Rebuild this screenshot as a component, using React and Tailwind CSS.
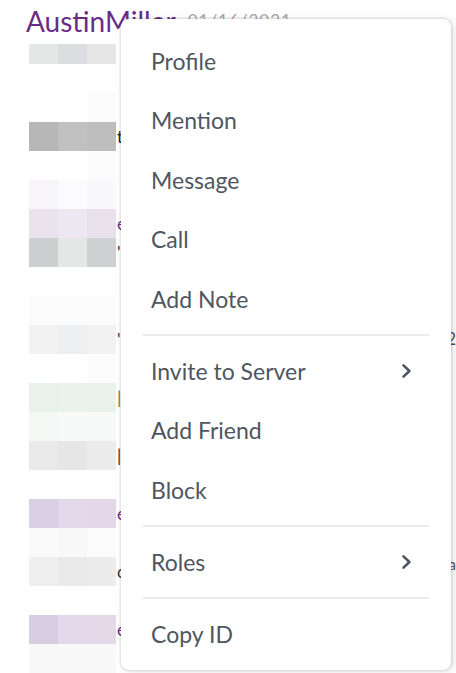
import { Fragment } from 'react';

const rows = [
  { h: 'h-[20px]', c: ['bg-[#e6e7e7]', 'bg-[#dcdde0]', 'bg-[#e6e6e6]'], t: '', tc: '' },
  { h: 'h-[29px]', c: ['bg-white', 'bg-white', 'bg-white'], t: '', tc: '' },
  { h: 'h-[29px]', c: ['bg-white', 'bg-white', 'bg-[#fbfbfb]'], t: '', tc: '' },
  { h: 'h-[29px]', c: ['bg-[#b7b7b7]', 'bg-[#c1c1c1]', 'bg-[#bdbdbd]'], t: 't', tc: 'text-[#222]' },
  { h: 'h-[29px]', c: ['bg-white', 'bg-white', 'bg-[#fcfcfc]'], t: '', tc: '' },
  { h: 'h-[29px]', c: ['bg-[#f7f5f8]', 'bg-[#fbfbfd]', 'bg-[#f9f8fa]'], t: '', tc: '' },
  { h: 'h-[29px]', c: ['bg-[#eae3ee]', 'bg-[#ede7f1]', 'bg-[#e8e1ec]'], t: 'e', tc: 'text-[#6a2c8a]' },
  { h: 'h-[29px]', c: ['bg-[#cdced0]', 'bg-[#e5e7e6]', 'bg-[#cfd0d2]'], t: "'", tc: 'text-[#333]' },
  { h: 'h-[29px]', c: ['bg-white', 'bg-white', 'bg-white'], t: '', tc: '' },
  { h: 'h-[29px]', c: ['bg-[#fcfcfc]', 'bg-[#fcfcfc]', 'bg-[#fbfbfb]'], t: '', tc: '' },
  { h: 'h-[29px]', c: ['bg-[#f2f2f2]', 'bg-[#eeeff1]', 'bg-[#f2f2f2]'], t: "'", tc: 'text-[#333]' },
  { h: 'h-[29px]', c: ['bg-white', 'bg-white', 'bg-[#fcfcfc]'], t: '', tc: '' },
  { h: 'h-[29px]', c: ['bg-[#e9f1ec]', 'bg-[#e9f2ec]', 'bg-[#e9f1eb]'], t: '|', tc: 'text-[#3c8a5a]' },
  { h: 'h-[29px]', c: ['bg-[#f4f8f5]', 'bg-[#f8faf9]', 'bg-[#f7f9f8]'], t: '', tc: '' },
  { h: 'h-[29px]', c: ['bg-[#e9e9e9]', 'bg-[#e5e6e5]', 'bg-[#ececec]'], t: '|', tc: 'text-[#333]' },
  { h: 'h-[29px]', c: ['bg-white', 'bg-white', 'bg-white'], t: '', tc: '' },
  { h: 'h-[29px]', c: ['bg-[#dbcfe3]', 'bg-[#e4d9ea]', 'bg-[#e4d7e9]'], t: 'e', tc: 'text-[#6a2c8a]' },
  { h: 'h-[29px]', c: ['bg-[#fafafa]', 'bg-[#f8f8f8]', 'bg-[#fbfbfb]'], t: '', tc: '' },
  { h: 'h-[29px]', c: ['bg-[#efefef]', 'bg-[#e8e9e8]', 'bg-[#ececec]'], t: 'c', tc: 'text-[#333]' },
  { h: 'h-[29px]', c: ['bg-white', 'bg-white', 'bg-white'], t: '', tc: '' },
  { h: 'h-[29px]', c: ['bg-[#d9cde2]', 'bg-[#e4d9ea]', 'bg-[#e4d8e9]'], t: 'e', tc: 'text-[#6a2c8a]' },
  { h: 'h-[29px]', c: ['bg-[#f8f8f8]', 'bg-[#f9f9f9]', 'bg-[#f9f9f9]'], t: '', tc: '' },
];

const menu = [
  ['Profile'],
  ['Mention'],
  ['Message'],
  ['Call'],
  ['Add Note'],
  'divider',
  ['Invite to Server', true],
  ['Add Friend'],
  ['Block'],
  'divider',
  ['Roles', true],
  'divider',
  ['Copy ID'],
];

function Chevron() {
  return (
    <svg width="11" height="16" viewBox="0 0 11 16" fill="none">
      <path d="M2.5 2.4 L8.4 8 L2.5 13.6" stroke="#4f5660" strokeWidth="2.6" strokeLinecap="round" strokeLinejoin="round" />
    </svg>
  );
}

export default function App() {
  return (
    <div className="relative w-[456px] h-[673px] overflow-hidden bg-white font-['Lato','Noto_Sans',sans-serif]">
      {/* chat behind the menu */}
      <div className="flex flex-col">
        <div className="flex items-baseline h-[44px] pl-[26px] pt-[2px] gap-[12px]">
          <span className="text-[28px] text-[#6a2c8a] leading-[38px]">AustinMiller</span>
          <span className="text-[17px] text-[#a8a8a8] tracking-[1px] -translate-y-[5px]">01/16/2021</span>
        </div>
        {rows.map((r, i) => (
          <div key={i} className={`flex pl-[29px] ${r.h}`}>
            {r.c.map((c, j) => (
              <div key={j} className={`w-[29px] h-full ${c}`} />
            ))}
            <span className={`pl-[1px] text-[17px] leading-[29px] ${r.tc}`}>{r.t}</span>
          </div>
        ))}
      </div>
      <div className="absolute right-0 top-[326px] text-[17px] text-[#555]">2</div>
      <div className="absolute right-0 top-[553px] text-[15px] text-[#555]">a</div>

      {/* context menu */}
      <div className="absolute left-[121px] top-[19px] w-[330px] h-[651px] rounded-lg bg-white px-[22px] pt-[12px] shadow-[0_0_0_1.5px_rgba(0,0,0,0.07),3px_1px_8px_rgba(0,0,0,0.12)]">
        {menu.map((m, i) =>
          m === 'divider' ? (
            <div key={i} className="h-[12.5px] flex items-center">
              <div className="w-full h-[2px] bg-[#ebebeb]" />
            </div>
          ) : (
            <Fragment key={i}>
              <div className="h-[59.5px] flex items-center justify-between pl-[8px] pr-[17px]">
                <span className="text-[23px] text-[#4f5660]">{m[0]}</span>
                {m[1] && <Chevron />}
              </div>
            </Fragment>
          )
        )}
      </div>
    </div>
  );
}
